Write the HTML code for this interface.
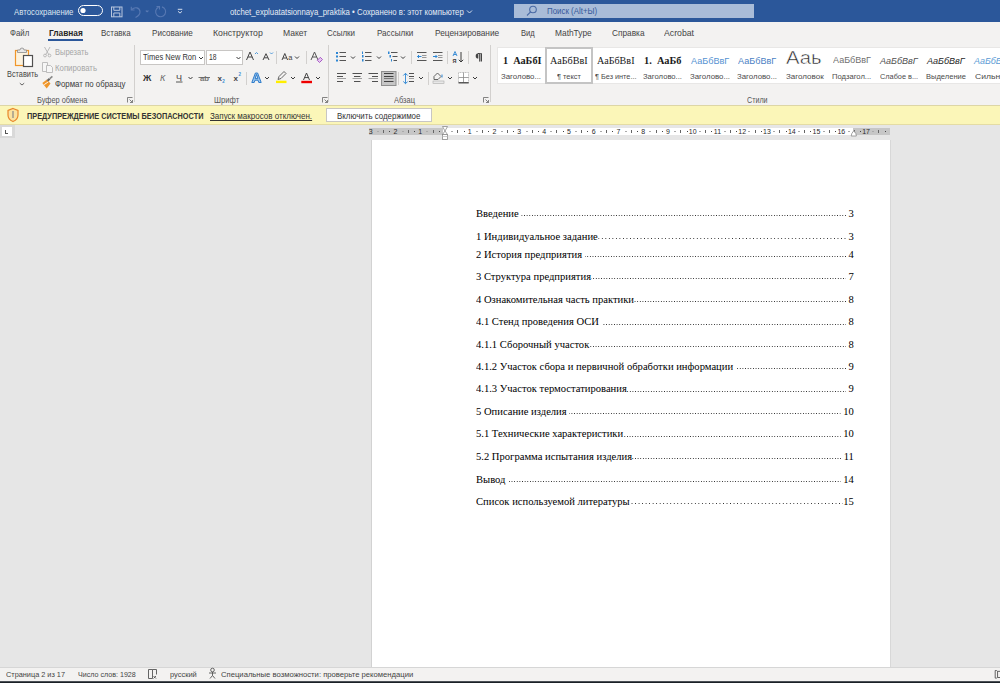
<!DOCTYPE html>
<html><head><meta charset="utf-8">
<style>
*{margin:0;padding:0;box-sizing:border-box}
html,body{width:1000px;height:683px;overflow:hidden;background:#e6e6e6;font-family:"Liberation Sans",sans-serif}
.a{position:absolute;white-space:pre;line-height:1;transform-origin:0 0}
.b{position:absolute}
svg{position:absolute;overflow:visible}
#title{position:absolute;left:0;top:0;width:1000px;height:22px;background:#2b579a}
#ribbon{position:absolute;left:0;top:22px;width:1000px;height:83px;background:#f3f2f1}
#msg{position:absolute;left:0;top:105px;width:1000px;height:20px;background:#fbf6b8;border-top:1px solid #ddd6a6;border-bottom:1px solid #e4dca4}
#page{position:absolute;left:372px;top:140px;width:518px;height:560px;background:#fff;box-shadow:-1px 0 0 #d2d2d2,1px 0 0 #d8d8d8}
#status{position:absolute;left:0;top:667px;width:1000px;height:16px;background:#f3f2f1;border-top:1px solid #d6d6d6;border-bottom:1px solid #1b2026}
#sb2{position:absolute;left:0;top:681px;width:1000px;height:1px;background:#4a4f55}
.toc{position:absolute;left:476.2px;width:392.8px;height:11px;display:flex;transform:scaleX(0.962);transform-origin:0 0;font-family:"Liberation Serif",serif;font-size:11px;line-height:1;color:#000;white-space:nowrap}
.toc .l{flex:1;margin:0 0 0 0;background-image:linear-gradient(to left,#2a2a2a 0,#2a2a2a 1.25px,transparent 1.25px);background-size:2.749px 1px;background-repeat:repeat-x;background-position:right 7.5px}
.sep{position:absolute;width:1px;background:#d2d0ce}
.rn{position:absolute;top:128px;font-size:7px;line-height:1;color:#2a2a2a;transform:translateX(-50%)}
.rd{position:absolute;top:130.5px;width:1px;height:1px;background:#444}
.rdl{position:absolute;top:130.5px;width:1.5px;height:1px;background:#aaa}
.rb{position:absolute;top:129.5px;width:1px;height:3px;background:#666}
.chevx{position:absolute;width:4px;height:4px;border-right:1px solid #555;border-bottom:1px solid #555;transform:rotate(45deg)}
</style></head><body>
<div id="title"></div>
<div id="ribbon"></div>
<div id="msg"></div>
<div id="page"></div>
<div id="status"></div><div id="sb2"></div>
<div class="b" style="left:369px;top:128px;width:74px;height:6.5px;background:#c6c6c6"></div>
<div class="b" style="left:443px;top:128px;width:410px;height:6.5px;background:#fff"></div>
<div class="b" style="left:853px;top:128px;width:37px;height:6.5px;background:#c6c6c6"></div>
<div class="rn" style="left:370.7px">3</div>
<div class="rdl" style="left:377px"></div>
<div class="rb" style="left:383px"></div>
<div class="rd" style="left:389px"></div>
<div class="rn" style="left:395.5px">2</div>
<div class="rdl" style="left:402px"></div>
<div class="rb" style="left:408px"></div>
<div class="rd" style="left:414px"></div>
<div class="rn" style="left:420.2px">1</div>
<div class="rdl" style="left:426px"></div>
<div class="rb" style="left:433px"></div>
<div class="rd" style="left:439px"></div>
<div class="rdl" style="left:451px"></div>
<div class="rb" style="left:457px"></div>
<div class="rd" style="left:464px"></div>
<div class="rn" style="left:469.8px">1</div>
<div class="rdl" style="left:476px"></div>
<div class="rb" style="left:482px"></div>
<div class="rd" style="left:488px"></div>
<div class="rn" style="left:494.5px">2</div>
<div class="rdl" style="left:501px"></div>
<div class="rb" style="left:507px"></div>
<div class="rd" style="left:513px"></div>
<div class="rn" style="left:519.3px">3</div>
<div class="rdl" style="left:526px"></div>
<div class="rb" style="left:532px"></div>
<div class="rd" style="left:538px"></div>
<div class="rn" style="left:544.1px">4</div>
<div class="rdl" style="left:550px"></div>
<div class="rb" style="left:556px"></div>
<div class="rd" style="left:563px"></div>
<div class="rn" style="left:568.9px">5</div>
<div class="rdl" style="left:575px"></div>
<div class="rb" style="left:581px"></div>
<div class="rd" style="left:587px"></div>
<div class="rn" style="left:593.6px">6</div>
<div class="rdl" style="left:600px"></div>
<div class="rb" style="left:606px"></div>
<div class="rd" style="left:612px"></div>
<div class="rn" style="left:618.4px">7</div>
<div class="rdl" style="left:625px"></div>
<div class="rb" style="left:631px"></div>
<div class="rd" style="left:637px"></div>
<div class="rn" style="left:643.2px">8</div>
<div class="rdl" style="left:649px"></div>
<div class="rb" style="left:656px"></div>
<div class="rd" style="left:662px"></div>
<div class="rn" style="left:667.9px">9</div>
<div class="rdl" style="left:674px"></div>
<div class="rb" style="left:680px"></div>
<div class="rd" style="left:687px"></div>
<div class="rn" style="left:692.7px">10</div>
<div class="rdl" style="left:699px"></div>
<div class="rb" style="left:705px"></div>
<div class="rd" style="left:711px"></div>
<div class="rn" style="left:717.5px">11</div>
<div class="rdl" style="left:724px"></div>
<div class="rb" style="left:730px"></div>
<div class="rd" style="left:736px"></div>
<div class="rn" style="left:742.2px">12</div>
<div class="rdl" style="left:748px"></div>
<div class="rb" style="left:755px"></div>
<div class="rd" style="left:761px"></div>
<div class="rn" style="left:767.0px">13</div>
<div class="rdl" style="left:773px"></div>
<div class="rb" style="left:779px"></div>
<div class="rd" style="left:786px"></div>
<div class="rn" style="left:791.8px">14</div>
<div class="rdl" style="left:798px"></div>
<div class="rb" style="left:804px"></div>
<div class="rd" style="left:810px"></div>
<div class="rn" style="left:816.5px">15</div>
<div class="rdl" style="left:823px"></div>
<div class="rb" style="left:829px"></div>
<div class="rd" style="left:835px"></div>
<div class="rn" style="left:841.3px">16</div>
<div class="rdl" style="left:848px"></div>
<div class="rb" style="left:854px"></div>
<div class="rd" style="left:860px"></div>
<div class="rn" style="left:866.1px">17</div>
<div class="rdl" style="left:872px"></div>
<div class="rb" style="left:878px"></div>
<div class="rd" style="left:885px"></div>
<!-- title bar -->
<svg style="left:0;top:0" width="1000" height="22">
 <rect x="78.5" y="5.5" width="24" height="10" rx="5" fill="none" stroke="#fff" stroke-width="1"/>
 <circle cx="83" cy="10.5" r="2.6" fill="#fff"/>
 <g fill="none" stroke="#b9c7de" stroke-width="1">
  <rect x="111.5" y="7" width="10.5" height="9.8"/>
  <path d="M113.8 7v3.3h6v-3.3"/>
  <path d="M113.8 16.8v-3.8h6v3.8"/>
 </g>
 <g fill="none" stroke="#5879b3" stroke-width="1.1">
  <path d="M131.8 9.5c3-3 8-2 8.2 2.2c0.2 3-2 4.5-4.5 5.8"/>
  <path d="M131.3 6.8v3.2h3.2"/>
  <path d="M145.8 10.5l1.3 1.3 1.3-1.3"/>
  <path d="M158.5 7.2a5 5 0 1 0 3.5 -0.3"/>
  <path d="M156.5 6.6h3v3"/>
 </g>
 <g fill="none" stroke="#d5deec" stroke-width="1">
  <path d="M177.8 9.3h4.5"/>
  <path d="M178 11.3l2 1.8 2-1.8"/>
  <path d="M467 10.5l2.5 2.5 2.5-2.5"/>
 </g>
 <rect x="514" y="4" width="240" height="14" fill="#a9bcd8"/>
 <g fill="none" stroke="#4a6aa5" stroke-width="1.1">
  <circle cx="533" cy="9.5" r="3.3"/>
  <path d="M530.6 11.9l-3.6 3.6"/>
 </g>
</svg>
<!-- tab underline -->
<div class="b" style="left:48px;top:39px;width:35px;height:2px;background:#2b579a"></div>
<!-- separators -->
<div class="sep" style="left:134px;top:45px;height:57px"></div>
<div class="sep" style="left:328px;top:45px;height:57px"></div>
<div class="sep" style="left:490px;top:45px;height:57px"></div>
<div class="sep" style="left:276px;top:51px;height:13px"></div>
<div class="sep" style="left:306px;top:51px;height:13px"></div>
<div class="sep" style="left:246px;top:72px;height:13px"></div>
<div class="sep" style="left:411px;top:51px;height:13px"></div>
<div class="sep" style="left:447px;top:51px;height:13px"></div>
<div class="sep" style="left:468px;top:51px;height:13px"></div>
<div class="sep" style="left:398px;top:72px;height:13px"></div>
<div class="sep" style="left:428px;top:72px;height:13px"></div>
<!-- ribbon icons -->
<svg style="left:0;top:0" width="500" height="105">
 <!-- paste -->
 <rect x="15.5" y="50.5" width="13" height="15" fill="#fdf3df" stroke="#f0962a" stroke-width="1.2"/>
 <path d="M17.5 52.5v-2.5h2.5a2 2 0 0 1 4 0h2.5v2.5z" fill="#e8e8e8" stroke="#8a8a8a" stroke-width="0.8"/>
 <rect x="23.5" y="55.5" width="9" height="11" fill="#fff" stroke="#505050" stroke-width="1.2"/>
 <path d="M19.8 83.2l2.2 1.8 2.2-1.8" fill="none" stroke="#555" stroke-width="0.9"/>
 <!-- scissors -->
 <g fill="none" stroke="#b4b4b4" stroke-width="0.9">
  <path d="M44.5 47l4.5 8M50 47l-4.5 8"/>
  <circle cx="45" cy="55.5" r="1.4"/><circle cx="49.5" cy="55.5" r="1.4"/>
 </g>
 <!-- copy -->
 <g fill="#f6f6f6" stroke="#b8b8b8" stroke-width="0.9">
  <path d="M42.5 62.5h5v9h-5z"/>
  <path d="M46.5 65.5h4l2 2v5h-6z"/>
 </g>
 <!-- format painter -->
 <path d="M42.3 83l4.6-3.6 3.6 4.2-3.8 4.8z" fill="#f0962a"/>
 <path d="M44.2 84.6l4.2-2.8" stroke="#fff" stroke-width="0.9"/>
 <path d="M47.5 80.8l2.2-2" stroke="#666" stroke-width="2.2"/>
 <path d="M49.8 78.6l2.6-2.2" stroke="#888" stroke-width="1.6"/>
 <!-- launchers -->
 <g fill="none" stroke="#666" stroke-width="0.8">
  <path d="M127.5 102.5v-5h5"/><path d="M129.5 99.5l3 3M130 102.5h2.5v-2.5"/>
  <path d="M322.5 102.5v-5h5"/><path d="M324.5 99.5l3 3M325 102.5h2.5v-2.5"/>
  <path d="M483.5 102.5v-5h5"/><path d="M485.5 99.5l3 3M486 102.5h2.5v-2.5"/>
 </g>
 <!-- font boxes -->
 <rect x="140.5" y="50.5" width="64" height="14" fill="#fff" stroke="#c8c6c4"/>
 <rect x="206.5" y="50.5" width="36" height="14" fill="#fff" stroke="#c8c6c4"/>
 <g fill="none" stroke="#3a3a3a" stroke-width="1">
  <path d="M199 57l2 2 2-2"/><path d="M236.5 57l2 2 2-2"/>
  <path d="M295 56.5l2 2 2-2"/>
  <path d="M188.5 77l2 2 2-2"/><path d="M265 77l2 2 2-2"/><path d="M291 77l2 2 2-2"/><path d="M316 77l2 2 2-2"/>
  <path d="M351 56.5l2 2 2-2"/><path d="M377 56.5l2 2 2-2"/><path d="M401 56.5l2 2 2-2"/>
  <path d="M419 77l2 2 2-2"/><path d="M448 77l2 2 2-2"/><path d="M473 77l2 2 2-2"/>
 </g>
 <!-- A grow/shrink -->
 <path d="M246.5 60l3.5-8 3.5 8M247.8 57h4.4" fill="none" stroke="#444" stroke-width="1"/>
 <path d="M255 54l1.5-1.5 1.5 1.5" fill="none" stroke="#3c8fd6" stroke-width="0.9"/>
 <path d="M263 60l3-6.3 3 6.3M264.1 57.8h3.8" fill="none" stroke="#444" stroke-width="1"/>
 <path d="M270 52.5l1.5 1.5 1.5-1.5" fill="none" stroke="#3c8fd6" stroke-width="0.9"/>
 <!-- Aa -->
 <path d="M282 60l2.8-6.5 2.8 6.5M283 58h3.6" fill="none" stroke="#444" stroke-width="1"/>
 <text x="288.3" y="60.2" font-family="Liberation Sans" font-size="7.5" fill="#444">a</text>
 <!-- clear formatting -->
 <path d="M311 60l3.5-8 3.5 8M312.3 57h4.4" fill="none" stroke="#555" stroke-width="1"/>
 <path d="M317.3 60.3l3-3 2.2 2.2-3 3z" fill="#e4c6ef" stroke="#a24cc2" stroke-width="0.9"/>
 <!-- B I U -->
 <text x="143" y="80.8" font-family="Liberation Sans" font-weight="bold" font-size="9.2" fill="#333">Ж</text>
 <text x="160" y="80.8" font-family="Liberation Sans" font-style="italic" font-size="9" fill="#666">К</text>
 <text x="176" y="80.5" font-family="Liberation Sans" font-size="9" fill="#444">Ч</text>
 <path d="M176 82h6.5" stroke="#444" stroke-width="0.9"/>
 <text x="200" y="80.8" font-family="Liberation Sans" font-weight="bold" font-size="7" fill="#777" textLength="9" lengthAdjust="spacingAndGlyphs">ab</text>
 <path d="M198.5 77.5h11.5" stroke="#666" stroke-width="0.9"/>
 <text x="217.5" y="80.5" font-family="Liberation Sans" font-weight="bold" font-size="8" fill="#444">x</text>
 <text x="222.3" y="82.5" font-family="Liberation Sans" font-weight="bold" font-size="4.5" fill="#3c8fd6">2</text>
 <text x="233.5" y="80.5" font-family="Liberation Sans" font-weight="bold" font-size="8" fill="#444">x</text>
 <text x="238.5" y="75.5" font-family="Liberation Sans" font-weight="bold" font-size="4.5" fill="#3c8fd6">2</text>
 <!-- text effects -->
 <path d="M251.8 82.5l3.6-9.5h2.2l3.6 9.5h-2.4l-0.8-2.3h-3l-0.8 2.3z M255.1 78.4h2.8l-1.4-3.9z" fill="#9cc6ee" fill-rule="evenodd" stroke="#1f73c6" stroke-width="0.9" stroke-linejoin="round"/>
 <!-- highlighter -->
 <path d="M278 79.5l1-3 5-5 2 2-5 5z" fill="none" stroke="#555" stroke-width="0.9"/>
 <rect x="276" y="80.7" width="10.5" height="2.4" fill="#ffee00"/>
 <!-- font color -->
 <path d="M303.5 80l3-7 3 7M304.6 77.6h3.8" fill="none" stroke="#444" stroke-width="1"/>
 <rect x="301.3" y="80.8" width="10.7" height="2.4" fill="#ee0000"/>
 <!-- bullets -->
 <g fill="#2c86d4">
  <rect x="336" y="52" width="2" height="2"/><rect x="336" y="55.5" width="2" height="2"/><rect x="336" y="59.5" width="2" height="2"/>
  <rect x="362" y="51.5" width="1" height="2.5"/><rect x="362" y="55" width="1.5" height="2.5"/><rect x="362" y="59" width="1.5" height="2.5"/>
  <rect x="388" y="51.5" width="1.5" height="2.5"/><rect x="389.5" y="55" width="1.5" height="2.5"/><rect x="391" y="59" width="1" height="2.5"/>
 </g>
 <g stroke="#555" stroke-width="1">
  <path d="M339.5 52.5h6.5M339.5 56.5h6.5M339.5 60.5h6.5"/>
  <path d="M365 52.5h6.5M365 56.5h6.5M365 60.5h6.5"/>
  <path d="M391 52.5h6.5M392.5 56.5h5M393.5 60.5h3.5"/>
 </g>
 <!-- alignment -->
 <g stroke="#505050" stroke-width="1">
  <path d="M337 73.5h9M337 76.5h6M337 81.5h6"/>
  <path d="M352.5 73.5h9.5M354 76.5h6.5M354 81.5h6.5"/>
  <path d="M368.5 73.5h9.5M372 76.5h6M372 81.5h6"/>
 </g>
 <g stroke="#a0a0a0" stroke-width="1">
  <path d="M337 78.5h9M352.5 78.5h9.5M368.5 78.5h9.5"/>
 </g>
 <rect x="381.5" y="71.5" width="14.5" height="14" fill="#c6c6c6" stroke="#8f8f8f"/>
 <g stroke="#404040" stroke-width="1"><path d="M384 73.5h9.5M384 76.5h9.5M384 81.5h9.5"/></g>
 <path d="M384 78.5h9.5" stroke="#777" stroke-width="1"/>
 <!-- line spacing -->
 <path d="M405.5 73.5v10" stroke="#2c86d4" stroke-width="0.9"/>
 <path d="M403.3 75.5l2.2-2.2 2.2 2.2M403.3 81.5l2.2 2.2 2.2-2.2" fill="none" stroke="#2c86d4" stroke-width="1"/>
 <g stroke="#505050" stroke-width="1"><path d="M409 73.5h5M409 76.5h5M409 81.5h5"/></g>
 <path d="M409 78.5h5" stroke="#a0a0a0" stroke-width="1"/>
 <!-- indent -->
 <g stroke="#555" stroke-width="1">
  <path d="M417 52.5h9.5M417 60.5h9.5M433 52.5h9.5M433 60.5h9.5"/>
 </g>
 <g stroke="#999" stroke-width="1"><path d="M422 55.5h4.5M422 57.5h4.5M438 55.5h4.5M438 57.5h4.5"/></g>
 <g fill="none" stroke="#2c86d4" stroke-width="1"><path d="M417.5 56.5h4M419 55l-1.5 1.5 1.5 1.5"/><path d="M433 56.5h4M435.5 55l1.5 1.5-1.5 1.5"/></g>
 <!-- sort -->
 <path d="M453 56l2-4.5 2 4.5M453.8 54.5h2.4" fill="none" stroke="#2c86d4" stroke-width="0.9"/>
 <text x="452.6" y="62.5" font-family="Liberation Sans" font-weight="bold" font-size="5.5" fill="#3a3a3a">Я</text>
 <path d="M461 52v10M458.8 59.8l2.2 2.2 2.2-2.2" fill="none" stroke="#3a3a3a" stroke-width="1"/>
 <!-- pilcrow -->
 <path d="M478 53.5h3.5v8M479.5 53.5v8" fill="none" stroke="#444" stroke-width="1"/><path d="M478.3 53.3a2.6 2.6 0 0 0 0 5.2z" fill="#444"/><path d="M480.3 53.5v8" stroke="#999" stroke-width="1.2"/>
 <!-- shading -->
 <path d="M434 76.5l3.5-3.5 3.5 3.5-3 3-4-0z" fill="none" stroke="#555" stroke-width="0.9"/>
 <path d="M442 74.5v3" stroke="#2c86d4" stroke-width="1"/>
 <rect x="433" y="81" width="11" height="2.3" fill="#e8e8e8" stroke="#aaa" stroke-width="0.6"/>
 <!-- borders -->
 <rect x="458.5" y="72.5" width="10" height="10" fill="#fff" stroke="#aaa" stroke-width="0.8" stroke-dasharray="1 0.6"/>
 <path d="M463.5 72.5v10M458.5 77.5h10" stroke="#8a8a8a" stroke-width="0.8"/>
 <path d="M458.5 82.8h10.2" stroke="#444" stroke-width="1.3"/>
</svg>
<!-- styles gallery -->
<div class="b" style="left:497px;top:47px;width:503px;height:37px;background:#fff;border:1px solid #e8e7e6;border-right:0"></div>
<div class="b" style="left:545px;top:47px;width:48px;height:37px;border:2px solid #c4c4c4"></div>
<!-- message bar shield + button -->
<svg style="left:0;top:0" width="40" height="125">
 <path d="M13 108.5l5 2v4.5c0 3.5-2.5 5.5-5 6.5-2.5-1-5-3-5-6.5v-4.5z" fill="#fbe2a0" stroke="#e8862a" stroke-width="1.2"/>
 <path d="M13 111v7" stroke="#888" stroke-width="1.2"/>
</svg>
<div class="b" style="left:326px;top:107.5px;width:106px;height:14px;background:#fff;border:1px solid #c8c6c4"></div>
<!-- ruler tab box -->
<div class="b" style="left:0;top:125px;width:15px;height:13px;background:#d9d9d9"></div><div class="b" style="left:2px;top:127px;width:10px;height:9px;background:#fff"></div>
<div class="b" style="left:5px;top:130px;width:3px;height:3.5px;border-left:1px solid #555;border-bottom:1px solid #555"></div>
<!-- status icons -->
<svg style="left:0;top:660px" width="230" height="23">
 <g fill="none" stroke="#555" stroke-width="0.9">
  <path d="M148.5 9.5h4v9h-4zM152.5 9.5h4v5"/>
  <path d="M153.5 16l2.5 2.5M156 16l-2.5 2.5"/>
  <circle cx="212.5" cy="10" r="1.8"/>
  <path d="M209 13h7M212.5 12v3.5M210 18.5l2.5-3 2.5 3"/>
 </g>
</svg>

<svg style="left:0;top:0" width="1000" height="150">
 <path d="M442.5 126.5h5l-2.5 4.5zM442.5 134.5l2.5-3.5 2.5 3.5z" fill="#fff" stroke="#8a8a8a" stroke-width="0.8"/>
 <rect x="442.5" y="134.5" width="5" height="5" fill="#fff" stroke="#8a8a8a" stroke-width="0.8"/>
 <path d="M442.5 136.5h5" stroke="#bbb" stroke-width="0.8"/>
 <path d="M851.2 136h5.2l-0.6-2.5-2-2.8-2 2.8z" fill="#fff" stroke="#8a8a8a" stroke-width="0.8"/>
</svg>
<svg style="left:0;top:0" width="1000" height="683">
 <path d="M996.8 670.5h-1.6v7.6h1.6" fill="none" stroke="#555" stroke-width="0.9"/>
 <rect x="997.6" y="671.3" width="6" height="6.2" fill="none" stroke="#555" stroke-width="0.9"/>
</svg>

<div class="a" style="left:13.80px;top:7.80px;font-size:8.5px;color:#dde5f0;transform:scaleX(0.9167);">Автосохранение</div>
<div class="a" style="left:229.60px;top:8.10px;font-size:8.5px;color:#e6ecf5;transform:scaleX(0.9164);">otchet_expluatatsionnaya_praktika • Сохранено в: этот компьютер</div>
<div class="a" style="left:546.80px;top:7.30px;font-size:8.5px;color:#35589a;transform:scaleX(0.9299);">Поиск (Alt+Ы)</div>
<div class="a" style="left:10.00px;top:28.51px;font-size:9.2px;color:#444;transform:scaleX(0.8520);">Файл</div>
<div class="a" style="left:48.75px;top:28.51px;font-size:9.2px;color:#262626;font-weight:700;transform:scaleX(0.9030);">Главная</div>
<div class="a" style="left:101.00px;top:28.51px;font-size:9.2px;color:#444;transform:scaleX(0.8710);">Вставка</div>
<div class="a" style="left:151.75px;top:28.51px;font-size:9.2px;color:#444;transform:scaleX(0.8805);">Рисование</div>
<div class="a" style="left:213.25px;top:28.51px;font-size:9.2px;color:#444;transform:scaleX(0.9496);">Конструктор</div>
<div class="a" style="left:283.25px;top:28.51px;font-size:9.2px;color:#444;transform:scaleX(0.9321);">Макет</div>
<div class="a" style="left:327.00px;top:28.51px;font-size:9.2px;color:#444;transform:scaleX(0.8653);">Ссылки</div>
<div class="a" style="left:376.75px;top:28.51px;font-size:9.2px;color:#444;transform:scaleX(0.8788);">Рассылки</div>
<div class="a" style="left:434.50px;top:28.51px;font-size:9.2px;color:#444;transform:scaleX(0.9055);">Рецензирование</div>
<div class="a" style="left:520.50px;top:28.51px;font-size:9.2px;color:#444;transform:scaleX(0.8271);">Вид</div>
<div class="a" style="left:554.50px;top:28.51px;font-size:9.2px;color:#444;transform:scaleX(0.9109);">MathType</div>
<div class="a" style="left:611.75px;top:28.51px;font-size:9.2px;color:#444;transform:scaleX(0.9016);">Справка</div>
<div class="a" style="left:663.75px;top:28.51px;font-size:9.2px;color:#444;transform:scaleX(0.9472);">Acrobat</div>
<div class="a" style="left:6.70px;top:70.10px;font-size:8.5px;color:#444;transform:scaleX(0.8631);">Вставить</div>
<div class="a" style="left:54.60px;top:47.80px;font-size:8.5px;color:#a6a6a6;transform:scaleX(0.8833);">Вырезать</div>
<div class="a" style="left:54.60px;top:63.80px;font-size:8.5px;color:#a6a6a6;transform:scaleX(0.9174);">Копировать</div>
<div class="a" style="left:54.60px;top:79.90px;font-size:8.5px;color:#3a3a3a;transform:scaleX(0.9237);">Формат по образцу</div>
<div class="a" style="left:36.70px;top:96.30px;font-size:8.5px;color:#555;transform:scaleX(0.8725);">Буфер обмена</div>
<div class="a" style="left:214.00px;top:96.30px;font-size:8.5px;color:#555;transform:scaleX(0.9010);">Шрифт</div>
<div class="a" style="left:394.20px;top:96.30px;font-size:8.5px;color:#555;transform:scaleX(0.8802);">Абзац</div>
<div class="a" style="left:747.40px;top:96.30px;font-size:8.5px;color:#555;transform:scaleX(0.8408);">Стили</div>
<div class="a" style="left:142.60px;top:53.18px;font-size:9px;color:#333;transform:scaleX(0.8353);">Times New Ron</div>
<div class="a" style="left:209.00px;top:53.18px;font-size:9px;color:#333;transform:scaleX(0.7488);">18</div>
<div class="a" style="left:27.00px;top:111.80px;font-size:8.5px;color:#333;font-weight:700;transform:scaleX(0.8622);">ПРЕДУПРЕЖДЕНИЕ СИСТЕМЫ БЕЗОПАСНОСТИ</div>
<div class="a" style="left:210.40px;top:111.80px;font-size:8.5px;color:#333;transform:scaleX(0.9431);text-decoration:underline;text-decoration-thickness:0.8px;text-underline-offset:1.2px;text-decoration-skip-ink:none;">Запуск макросов отключен.</div>
<div class="a" style="left:336.60px;top:111.60px;font-size:8.5px;color:#333;transform:scaleX(0.9315);">Включить содержимое</div>
<div class="a" style="left:5.70px;top:670.83px;font-size:8px;color:#444;transform:scaleX(0.9158);">Страница 2 из 17</div>
<div class="a" style="left:77.70px;top:670.83px;font-size:8px;color:#444;transform:scaleX(0.8901);">Число слов: 1928</div>
<div class="a" style="left:169.70px;top:670.83px;font-size:8px;color:#444;transform:scaleX(0.9297);">русский</div>
<div class="a" style="left:221.30px;top:670.83px;font-size:8px;color:#444;transform:scaleX(0.9586);">Специальные возможности: проверьте рекомендации</div>
<div class="a" style="left:502.50px;top:55.09px;font-size:11px;color:#1a1a1a;font-weight:700;font-family:'Liberation Serif',serif;transform:scaleX(0.9309);">1  АаБбI</div>
<div class="a" style="left:549.80px;top:55.09px;font-size:11px;color:#1a1a1a;font-family:'Liberation Serif',serif;transform:scaleX(0.9241);">АаБбВвI</div>
<div class="a" style="left:597.00px;top:55.09px;font-size:11px;color:#1a1a1a;font-family:'Liberation Serif',serif;transform:scaleX(0.9192);">АаБбВвI</div>
<div class="a" style="left:644.00px;top:55.09px;font-size:11px;color:#1a1a1a;font-weight:700;font-family:'Liberation Serif',serif;transform:scaleX(0.9415);">1.  АаБб</div>
<div class="a" style="left:691.20px;top:56.07px;font-size:9.6px;color:#5592d2;transform:scaleX(0.9497);">АаБбВвГ</div>
<div class="a" style="left:738.00px;top:56.75px;font-size:8.8px;color:#4a7fc4;transform:scaleX(1.0329);">АаБбВвГ</div>
<div class="a" style="left:786.00px;top:49.69px;font-size:17.5px;color:#262626;transform:scaleX(1.1551);-webkit-text-stroke:0.5px #fff;">Ааь</div>
<div class="a" style="left:833.00px;top:57.16px;font-size:8.2px;color:#707070;transform:scaleX(1.1039);">АаБбВвГ</div>
<div class="a" style="left:880.00px;top:55.80px;font-size:9.8px;color:#505050;transform:scaleX(0.9226);font-style:italic;">АаБбВвГ</div>
<div class="a" style="left:926.90px;top:55.80px;font-size:9.8px;color:#1f1f1f;transform:scaleX(0.9250);font-style:italic;">АаБбВвГ</div>
<div class="a" style="left:974.40px;top:55.80px;font-size:9.8px;color:#5b9bd5;transform:scaleX(0.9129);font-style:italic;">АаБбВвГ</div>
<div class="a" style="left:501.00px;top:72.74px;font-size:8.1px;color:#4a4a4a;transform:scaleX(0.9693);">Заголово...</div>
<div class="a" style="left:556.70px;top:72.74px;font-size:8.1px;color:#4a4a4a;transform:scaleX(0.9115);">¶ текст</div>
<div class="a" style="left:595.00px;top:72.74px;font-size:8.1px;color:#4a4a4a;transform:scaleX(0.9013);">¶ Без инте...</div>
<div class="a" style="left:643.00px;top:72.74px;font-size:8.1px;color:#4a4a4a;transform:scaleX(0.9451);">Заголово...</div>
<div class="a" style="left:690.00px;top:72.74px;font-size:8.1px;color:#4a4a4a;transform:scaleX(0.9693);">Заголово...</div>
<div class="a" style="left:737.00px;top:72.74px;font-size:8.1px;color:#4a4a4a;transform:scaleX(0.9693);">Заголово...</div>
<div class="a" style="left:785.80px;top:72.74px;font-size:8.1px;color:#4a4a4a;transform:scaleX(0.9905);">Заголовок</div>
<div class="a" style="left:832.00px;top:72.74px;font-size:8.1px;color:#4a4a4a;transform:scaleX(0.9410);">Подзагол...</div>
<div class="a" style="left:880.00px;top:72.74px;font-size:8.1px;color:#4a4a4a;transform:scaleX(0.9044);">Слабое в...</div>
<div class="a" style="left:926.00px;top:72.74px;font-size:8.1px;color:#4a4a4a;transform:scaleX(0.9326);">Выделение</div>
<div class="a" style="left:975.00px;top:72.74px;font-size:8.1px;color:#4a4a4a;transform:scaleX(1.0625);">Сильное...</div>
<div class="toc" style="top:207.79px"><span>Введение</span><span class="l" style="padding-left:3px;margin-right:2.5px;background-origin:content-box;background-clip:content-box"></span><span>3</span></div>
<div class="toc" style="top:230.79px"><span>1 Индивидуальное задание</span><span class="l" style="background-size:3.665px 1px;background-origin:content-box;background-clip:content-box"></span><span>3</span></div>
<div class="toc" style="top:248.79px"><span>2 История предприятия</span><span class="l" style="padding-left:3px;margin-right:2.5px;background-origin:content-box;background-clip:content-box"></span><span>4</span></div>
<div class="toc" style="top:270.79px"><span>3 Структура предприятия</span><span class="l" style="margin-right:2.5px;background-origin:content-box;background-clip:content-box"></span><span>7</span></div>
<div class="toc" style="top:293.79px"><span>4 Ознакомительная часть практики</span><span class="l" style="margin-right:2.5px;background-origin:content-box;background-clip:content-box"></span><span>8</span></div>
<div class="toc" style="top:316.09px"><span>4.1 Стенд проведения ОСИ</span><span class="l" style="padding-left:3px;margin-right:2.5px;background-origin:content-box;background-clip:content-box"></span><span>8</span></div>
<div class="toc" style="top:338.79px"><span>4.1.1 Сборочный участок</span><span class="l" style="margin-right:2.5px;background-origin:content-box;background-clip:content-box"></span><span>8</span></div>
<div class="toc" style="top:360.79px"><span>4.1.2 Участок сбора и первичной обработки информации</span><span class="l" style="padding-left:3px;margin-right:2.5px;background-origin:content-box;background-clip:content-box"></span><span>9</span></div>
<div class="toc" style="top:383.09px"><span>4.1.3 Участок термостатирования</span><span class="l" style="margin-right:2.5px;background-origin:content-box;background-clip:content-box"></span><span>9</span></div>
<div class="toc" style="top:405.79px"><span>5 Описание изделия</span><span class="l" style="padding-left:3px;margin-right:2.5px;background-origin:content-box;background-clip:content-box"></span><span>10</span></div>
<div class="toc" style="top:428.09px"><span>5.1 Технические характеристики</span><span class="l" style="margin-right:2.5px;background-origin:content-box;background-clip:content-box"></span><span>10</span></div>
<div class="toc" style="top:450.79px"><span>5.2 Программа испытания изделия</span><span class="l" style="margin-right:2.5px;background-origin:content-box;background-clip:content-box"></span><span>11</span></div>
<div class="toc" style="top:473.79px"><span>Вывод</span><span class="l" style="padding-left:3px;margin-right:2.5px;background-origin:content-box;background-clip:content-box"></span><span>14</span></div>
<div class="toc" style="top:495.79px"><span>Список используемой литературы</span><span class="l" style="background-size:3.665px 1px;background-origin:content-box;background-clip:content-box"></span><span>15</span></div>
</body></html>
